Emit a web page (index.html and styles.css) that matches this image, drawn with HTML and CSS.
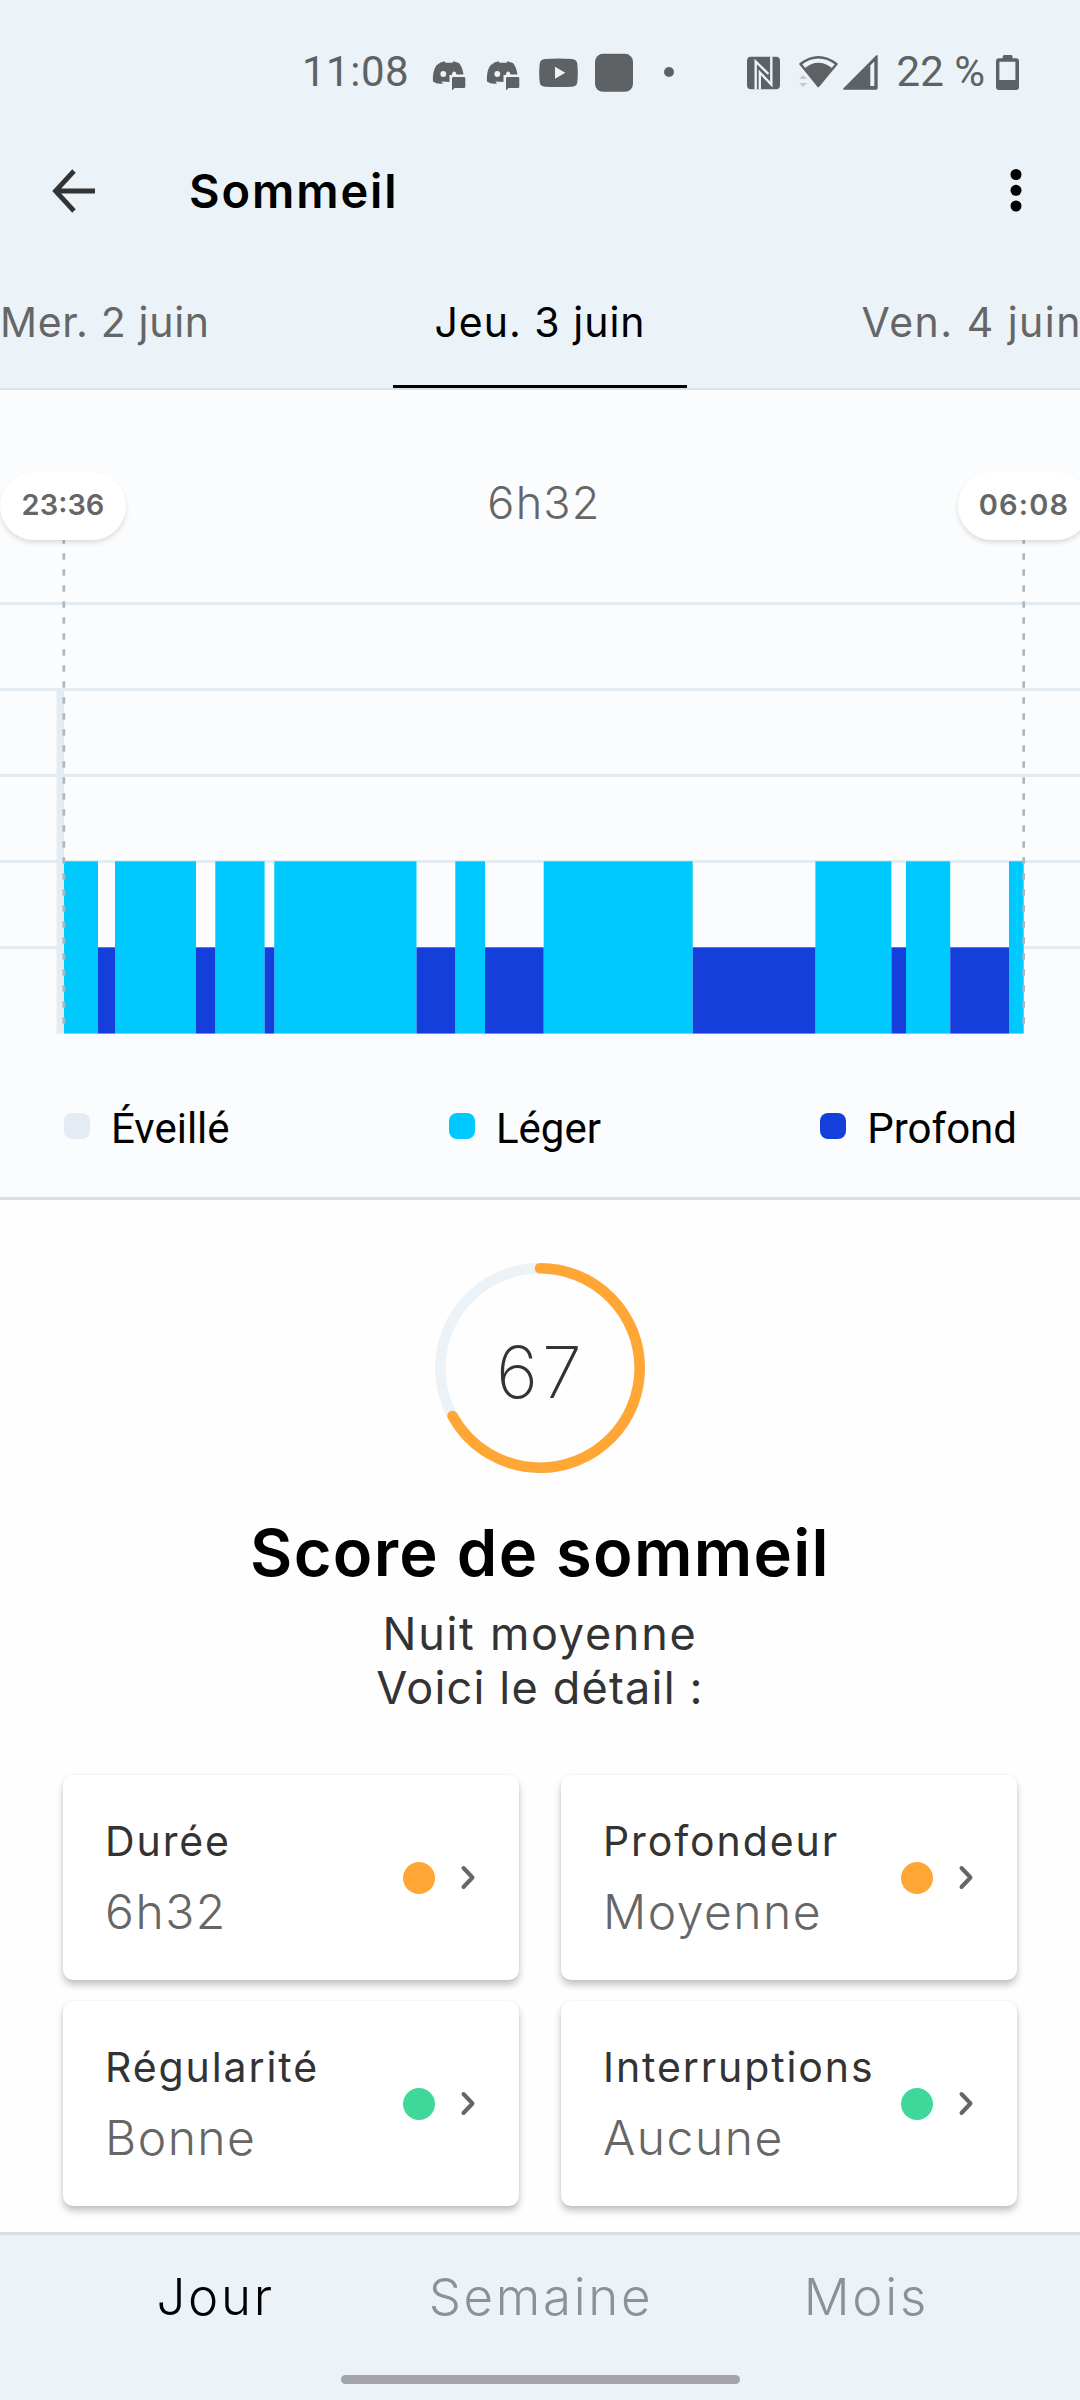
FILE: index.html
```html
<!DOCTYPE html>
<html lang="fr">
<head>
    <meta charset="UTF-8">
    <meta name="viewport" content="width=device-width, initial-scale=1.0">
    <title>Sommeil</title>
    <link rel="stylesheet" href="styles.css">
</head>
<body>
    <!-- Shared icons -->
    <svg class="defs" width="0" height="0">
        <symbol id="discord" viewBox="0 0 36 40">
            <path fill-rule="evenodd" d="M8.5 10.5 L12.5 9.3 L13.5 10.8 H20.5 L21.5 9.3 L27 11 Q30.8 16 31.5 22.5 H24.5 Q24 19 21.8 19.6 Q19.8 20.5 19.8 23 H17.5 V30 L9.5 29.6 L11 31.5 Q5 32.5 1 29.5 Q.2 19 4.5 13.2 Z M14.2 22 a2.9 3 0 1 0 -5.8 0 a2.9 3 0 1 0 5.8 0 Z"/>
            <path d="M21.3 25 H32 Q33.3 25 33.3 26.3 V34.7 Q33.3 36 32 36 H22.7 L20 38.3 V26.3 Q20 25 21.3 25 Z"/>
        </symbol>
        <symbol id="chevron" viewBox="0 0 18 28">
            <path d="M4.5 4 L13.5 13.500 L4.5 23" fill="none" stroke="#666" stroke-width="4" stroke-linecap="round" stroke-linejoin="round"/>
        </symbol>
    </svg>

    <div class="status-bar">
        <span class="clock">11:08</span>
        <div class="notifications">
            <svg width="36" height="40"><use href="#discord"/></svg>
            <svg width="36" height="40"><use href="#discord"/></svg>
            <svg width="39" height="40" viewBox="0 0 39 40"><path fill-rule="evenodd" d="M6 7 Q19.5 6 33 7 Q38 7.3 38.3 12 Q39.3 21 38.3 30 Q38 34.5 33 34.7 Q19.5 35.5 6 34.7 Q1 34.5 .7 30 Q-.3 21 .7 12 Q1 7.3 6 7 Z M16 14.7 V26.7 L26.3 20.7 Z"/></svg>
            <svg width="38" height="40"><rect y="1.8" width="38" height="38" rx="8"/></svg>
            <svg class="more-dot" width="10" height="40"><circle cx="5" cy="20" r="5"/></svg>
        </div>
        <div class="system">
            <svg class="nfc" width="33" height="40" viewBox="0 0 33 40">
                <rect y="4.7" width="33" height="32.5" rx="4"/>
                <path d="M8.7 37.5 V9.5 L21.5 22 M24.3 4.5 V32.5 L12.8 20.5 V37.5" fill="none" stroke="#ebf3f9" stroke-width="2.4"/>
            </svg>
            <svg width="42" height="40" viewBox="0 0 42 40">
                <path d="M2.5 12 Q20.3 -1.5 38.5 12 L20.3 34 Z" fill="none" stroke="#5f6265" stroke-width="2.4" stroke-linejoin="round"/>
                <path d="M7 16 Q20.3 5.5 34 16 L20.3 34.5 Z"/>
                <path d="M1 27 L5 22.7 L9.3 27 Z M1 31 H9.3 L5 35 Z" fill="#c5cacf"/>
            </svg>
            <svg class="signal" width="35" height="40" viewBox="0 0 35 40"><path fill-rule="evenodd" d="M1 37.7 Q-.3 37.5 .5 36.3 L33 3.6 Q34.7 2.3 34.7 4.5 V36 Q34.7 37.7 33 37.7 Z M27.3 13.5 V34 H31.3 V9.5 Z"/></svg>
            <span class="battery-level">22 %</span>
            <svg width="23" height="40" viewBox="0 0 23 40"><path fill-rule="evenodd" d="M6.7 6.3 V4.5 Q6.7 3 8.2 3 H15 Q16.5 3 16.5 4.5 V6.3 H20 Q23 6.3 23 9.3 V35 Q23 38 20 38 H3 Q0 38 0 35 V9.3 Q0 6.3 3 6.3 Z M3.4 9.7 V28 H19.4 V9.7 Z"/></svg>
        </div>
    </div>

    <header class="app-bar">
        <svg width="44" height="44" viewBox="0 0 44 44"><path d="M43 22 H4 M22 2 L3.5 22 L22 42" fill="none" stroke="#333" stroke-width="4.8"/></svg>
        <h1>Sommeil</h1>
        <svg class="menu" width="12" height="44" viewBox="0 0 12 44"><circle cx="6" cy="5.5" r="5.5"/><circle cx="6" cy="21.3" r="5.5"/><circle cx="6" cy="37" r="5.5"/></svg>
    </header>

    <nav class="days">
        <a class="day previous">Mer. 2 juin</a>
        <a class="day active">Jeu. 3 juin</a>
        <a class="day next">Ven. 4 juin</a>
    </nav>

    <section class="chart">
        <div class="chart-header">
            <span class="time">23:36</span>
            <span class="total">6h32</span>
            <span class="time end">06:08</span>
        </div>
        <svg class="plot" width="1080" height="494" viewBox="0 540 1080 494">
            <!-- Grid -->
            <g fill="#e4ebf1">
                <rect y="602" width="1080" height="3"/>
                <rect y="688" width="1080" height="3"/>
                <rect y="774" width="1080" height="3"/>
                <rect y="860" width="1080" height="3"/>
                <rect y="946" width="64" height="3"/>
                <rect x="1024" y="946" width="56" height="3"/>
                <rect x="56.6" y="689" width="7.4" height="344.6"/>
            </g>
            <!-- Light sleep -->
            <g fill="#00c9ff">
                <rect x="64" y="861.3" width="34" height="172.3"/>
                <rect x="115" y="861.3" width="81" height="172.3"/>
                <rect x="215.3" y="861.3" width="49.3" height="172.3"/>
                <rect x="274.3" y="861.3" width="142.2" height="172.3"/>
                <rect x="455.3" y="861.3" width="29.7" height="172.3"/>
                <rect x="543.7" y="861.3" width="149" height="172.3"/>
                <rect x="815.4" y="861.3" width="76" height="172.3"/>
                <rect x="906" y="861.3" width="44.2" height="172.3"/>
                <rect x="1009" y="861.3" width="14.7" height="172.3"/>
            </g>
            <!-- Deep sleep -->
            <g fill="#153fdb">
                <rect x="98" y="947.3" width="17" height="86.3"/>
                <rect x="196" y="947.3" width="19.3" height="86.3"/>
                <rect x="264.6" y="947.3" width="9.7" height="86.3"/>
                <rect x="416.5" y="947.3" width="38.8" height="86.3"/>
                <rect x="485" y="947.3" width="58.7" height="86.3"/>
                <rect x="692.7" y="947.3" width="122.7" height="86.3"/>
                <rect x="891.4" y="947.3" width="14.6" height="86.3"/>
                <rect x="950.2" y="947.3" width="58.8" height="86.3"/>
            </g>
            <!-- Bedtime and wake-up -->
            <g stroke="#a0bccb" stroke-width="2.7" stroke-dasharray="6.5 9.5">
                <path d="M63.8 537.2 V1033"/>
                <path d="M1023.7 537.2 V1033"/>
            </g>
        </svg>
        <div class="legend">
            <span class="legend-item"><i class="swatch awake"></i>Éveillé</span>
            <span class="legend-item"><i class="swatch light"></i>Léger</span>
            <span class="legend-item"><i class="swatch deep"></i>Profond</span>
        </div>
    </section>

    <section class="score">
        <div class="ring">
            <svg width="210" height="210" viewBox="0 0 210 210" fill="none" stroke-width="10.6">
                <circle cx="105" cy="105" r="99.7" stroke="#ebf3f9"/>
                <circle cx="105" cy="105" r="99.7" stroke="#ffa634" stroke-linecap="round" pathLength="100" stroke-dasharray="67 100" transform="rotate(-90 105 105)"/>
            </svg>
            <span class="ring-value">67</span>
        </div>
        <h2>Score de sommeil</h2>
        <p class="summary">Nuit moyenne</p>
        <p class="summary detail">Voici le détail :</p>
    </section>

    <section class="cards">
        <div class="card">
            <div class="card-text"><h3>Durée</h3><p>6h32</p></div>
            <i class="dot average"></i>
            <svg width="18" height="28"><use href="#chevron"/></svg>
        </div>
        <div class="card">
            <div class="card-text"><h3>Profondeur</h3><p>Moyenne</p></div>
            <i class="dot average"></i>
            <svg width="18" height="28"><use href="#chevron"/></svg>
        </div>
        <div class="card">
            <div class="card-text"><h3>Régularité</h3><p>Bonne</p></div>
            <i class="dot good"></i>
            <svg width="18" height="28"><use href="#chevron"/></svg>
        </div>
        <div class="card">
            <div class="card-text"><h3>Interruptions</h3><p>Aucune</p></div>
            <i class="dot good"></i>
            <svg width="18" height="28"><use href="#chevron"/></svg>
        </div>
    </section>

    <footer class="bottom-bar">
        <nav class="periods">
            <a class="current">Jour</a>
            <a>Semaine</a>
            <a>Mois</a>
        </nav>
        <div class="gesture-bar"></div>
    </footer>
</body>
</html>
```
FILE: styles.css
```css
* {
    box-sizing: border-box;
    margin: 0;
    padding: 0;
}

body {
    width: 1080px;
    height: 2400px;
    display: flex;
    flex-direction: column;
    overflow: hidden;
    background: #fefefe;
    font-family: Inter, sans-serif;
    color: #333;
}

svg {
    display: block;
    flex-shrink: 0;
}

.defs {
    position: absolute;
}

/* Status bar */
.status-bar {
    height: 144px;
    padding: 0 61px 0 302px;
    display: flex;
    align-items: center;
    background: #ebf3f9;
    font: 400 42px/46px Roboto, sans-serif;
    color: #5f6265;
    fill: #5f6265;
}

.clock {
    width: 130px;
    letter-spacing: 0.5px;
}

.notifications {
    display: flex;
    gap: 17px;
}

.notifications svg:first-child {
    margin-right: 1px;
}

.notifications .more-dot {
    margin-left: 14px;
}

.system {
    display: flex;
    align-items: center;
    margin-left: auto;
}

.nfc {
    margin-right: 18px;
}

.signal {
    margin: 0 19px 0 3px;
}

.battery-level {
    margin-right: 11px;
}

/* App bar */
.app-bar {
    height: 94px;
    padding: 0 58px 0 52px;
    display: flex;
    align-items: center;
    background: #ebf3f9;
}

.app-bar h1 {
    margin-left: 93px;
    font-size: 47px;
    font-weight: 600;
    line-height: 60px;
    letter-spacing: 1.9px;
    color: #000;
}

.menu {
    margin-left: auto;
}

/* Day tabs */
.days {
    height: 152px;
    display: grid;
    grid-template-columns: 1fr 294px 1fr;
    background: #ebf3f9;
    border-bottom: 2px solid #d7e3e9;
}

.day {
    padding-top: 60px;
    font-size: 41px;
    line-height: 48px;
    letter-spacing: 1px;
    white-space: nowrap;
    color: #666;
}

.day.previous {
    letter-spacing: 0.7px;
}

.day.active {
    text-align: center;
    color: #000;
    border-bottom: 3px solid #000;
}

.day.next {
    margin-right: -2px;
    text-align: right;
    letter-spacing: 1.5px;
}

/* Chart */
.chart {
    height: 810px;
    padding-top: 82px;
    overflow: hidden;
    background: #fbfcfe;
    border-bottom: 3px solid #d5e0e6;
}

.chart-header {
    width: 1090px;
    height: 68px;
    display: grid;
    grid-template-columns: 126px 1fr 132px;
    text-align: center;
    color: #666;
}

.time {
    position: relative;
    z-index: 1;
    background: #fff;
    border-radius: 34px;
    box-shadow: 0 3px 5px rgba(0, 0, 0, 0.12);
    font-size: 29px;
    font-weight: 600;
    line-height: 65px;
}

.time.end {
    letter-spacing: 1.2px;
}

.total {
    padding-left: 4px;
    font-size: 45px;
    font-weight: 300;
    line-height: 62px;
    letter-spacing: 1.2px;
}

.legend {
    padding: 70px 63px 0 64px;
    display: flex;
    justify-content: space-between;
    font: 400 42px/50px Roboto, sans-serif;
    color: #000;
}

.legend-item {
    display: flex;
    align-items: center;
}

.swatch {
    width: 26px;
    height: 26px;
    margin: 0 21px 6px 0;
    border-radius: 8px;
}

.awake { background: #e4ebf2; }
.light { background: #00c9ff; }
.deep { background: #153fdb; }

/* Score */
.score {
    padding-top: 63px;
    text-align: center;
}

.ring {
    height: 210px;
    display: grid;
    justify-content: center;
}

.ring svg,
.ring-value {
    grid-area: 1 / 1;
}

.ring-value {
    padding-left: 2px;
    font-size: 72px;
    font-weight: 200;
    line-height: 218px;
    letter-spacing: 4px;
}

.score h2 {
    margin-top: 40px;
    font-size: 65px;
    font-weight: 600;
    line-height: 80px;
    letter-spacing: 1.3px;
    color: #000;
}

.summary {
    font-size: 45px;
    line-height: 54px;
    letter-spacing: 1.7px;
}

.score h2 + .summary {
    margin-top: 14px;
}

.summary.detail {
    letter-spacing: 1.2px;
}

/* Detail cards */
.cards {
    margin-top: 60px;
    padding: 0 63px;
    display: grid;
    grid-template-columns: 456px 456px;
    grid-auto-rows: 205px;
    gap: 21px 42px;
}

.card {
    padding: 0 42px;
    display: flex;
    align-items: center;
    background: #fff;
    border-radius: 10px;
    box-shadow: 0 5px 7px rgba(0, 0, 0, 0.23), 0 0 3px rgba(0, 0, 0, 0.06);
}

.card-text {
    width: 298px;
    padding-bottom: 2px;
}

.card h3 {
    font-size: 41px;
    font-weight: 400;
    line-height: 70px;
    letter-spacing: 1.9px;
    white-space: nowrap;
}

.card p {
    font-size: 48px;
    font-weight: 300;
    line-height: 72px;
    letter-spacing: 1.5px;
    color: #666;
}

.dot {
    width: 32px;
    height: 32px;
    margin-right: 24px;
    border-radius: 50%;
}

.average { background: #ffa634; }
.good { background: #3fd898; }

/* Bottom bar */
.bottom-bar {
    height: 168px;
    margin-top: auto;
    background: #ebf3f9;
    border-top: 3px solid #d5e0e6;
}

.periods {
    padding: 0 51px 0 53px;
    display: grid;
    grid-template-columns: repeat(3, 1fr);
    text-align: center;
    font-size: 51px;
    font-weight: 300;
    line-height: 124px;
    letter-spacing: 2.7px;
    color: #8d9194;
}

.periods .current {
    color: #000;
}

.gesture-bar {
    width: 399px;
    height: 9px;
    margin: 16px auto 0;
    background: #a3a5a8;
    border-radius: 5px;
}
```
